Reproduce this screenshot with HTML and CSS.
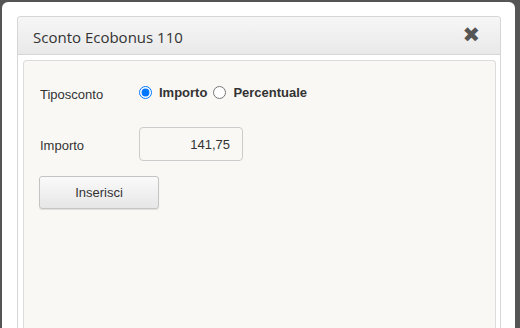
FILE: index.html
```html
<!DOCTYPE html>
<html>
<head>
    <title>Sconto Ecobonus 110</title>
    <link rel="stylesheet" href="styles.css">
</head>
<body>
    <div class="dialog">
        <div class="panel">
            <div class="panel-header">
                <span class="panel-title">Sconto Ecobonus 110</span>
                <span class="close-btn">&#x2716;</span>
            </div>
            <div class="panel-body">
                <div class="form-box">
                    <div class="form-row">
                        <label class="form-label">Tiposconto</label>
                        <div class="radio-group">
                            <label class="radio-opt"><input type="radio" name="tipo" checked> Importo</label>
                            <label class="radio-opt"><input type="radio" name="tipo"> Percentuale</label>
                        </div>
                    </div>
                    <div class="form-row row-importo">
                        <label class="form-label">Importo</label>
                        <input type="text" class="amount" value="141,75">
                    </div>
                    <button class="button">Inserisci</button>
                </div>
            </div>
        </div>
    </div>
</body>
</html>
```

FILE: styles.css
```css
body {
    margin: 0;
    background-color: #555;
    font-family: Arial, 'Liberation Sans', sans-serif;
    height: 328px;
    overflow: hidden;
}
.dialog {
    margin: 2px 5px 0 2px;
    height: 326px;
    background: white;
    border-radius: 6px 6px 0 0;
    padding: 14px 14px 0 15px;
    box-sizing: border-box;
}
.panel {
    border: 1px solid #d6d6d6;
    border-bottom: none;
    border-radius: 4px 4px 0 0;
    height: 100%;
    display: flex;
    flex-direction: column;
}
.panel-header {
    height: 37px;
    display: flex;
    align-items: center;
    justify-content: space-between;
    padding: 0 20px 0 15px;
    background: linear-gradient(#f6f6f6, #e9e9e9);
    border-bottom: 1px solid #d6d6d6;
    border-radius: 4px 4px 0 0;
}
.panel-title {
    font-family: 'Open Sans', sans-serif;
    font-size: 15px;
    color: #333;
    margin-top: 2px;
}
.close-btn {
    font-family: 'DejaVu Sans', sans-serif;
    font-size: 21px;
    color: #555;
    margin-top: -1px;
}
.panel-body {
    flex: 1;
    padding: 5px 4px 0 5px;
    display: flex;
}
.form-box {
    flex: 1;
    background: #f9f8f4;
    border: 1px solid #dcdcdc;
    border-bottom: none;
    border-radius: 4px 4px 0 0;
    padding: 26px 16px 0 16px;
}
.form-row {
    display: flex;
    align-items: center;
}
.form-label {
    width: 99px;
    font-size: 13px;
    color: #333;
}
.radio-group {
    display: flex;
    gap: 6px;
    margin-top: -5px;
}
.radio-opt {
    display: flex;
    align-items: center;
    font-size: 13px;
    font-weight: bold;
    color: #333;
}
.radio-opt input {
    margin: 0 7px 0 0;
    width: 13px;
    height: 13px;
}
.row-importo {
    margin-top: 25px;
}
.row-importo .form-label {
    margin-top: 2px;
}
.amount {
    width: 104px;
    height: 34px;
    box-sizing: border-box;
    border: 1px solid #ccc;
    border-radius: 4px;
    background: #f9f8f4;
    text-align: right;
    padding: 0 12px;
    font-family: Arial, 'Liberation Sans', sans-serif;
    font-size: 13px;
    color: #333;
}
.button {
    margin: 15px 0 0 -1px;
    width: 120px;
    height: 33px;
    border: 1px solid #c4c4c4;
    border-radius: 3px;
    background: linear-gradient(#fafafa, #e6e6e6);
    font-family: Arial, 'Liberation Sans', sans-serif;
    font-size: 13px;
    color: #333;
    box-shadow: 0 1px 1px rgba(0,0,0,0.1);
}
```
